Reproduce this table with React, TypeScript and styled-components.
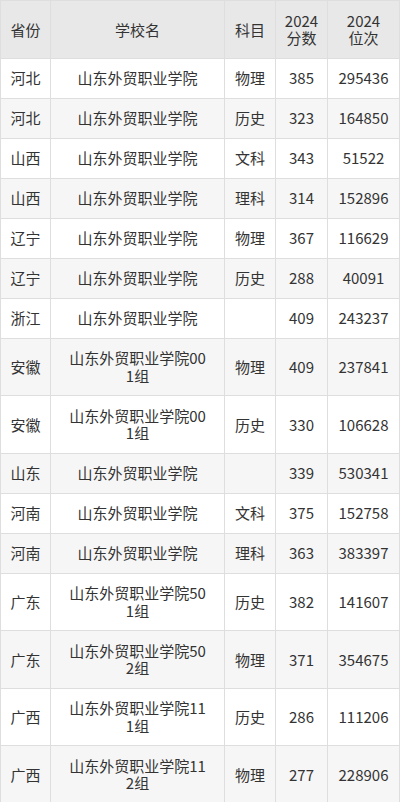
import React from "react"
import styled, { createGlobalStyle } from "styled-components"

const GlobalStyle = createGlobalStyle`
  html, body {
    margin: 0;
    padding: 0;
    background: #ffffff;
  }
  body {
    font-family: "Noto Sans CJK SC", "Noto Sans", sans-serif;
    color: #333333;
  }
`

const rows = [
  { province: "河北", school: "山东外贸职业学院", subject: "物理", score: "385", rank: "295436" },
  { province: "河北", school: "山东外贸职业学院", subject: "历史", score: "323", rank: "164850" },
  { province: "山西", school: "山东外贸职业学院", subject: "文科", score: "343", rank: "51522" },
  { province: "山西", school: "山东外贸职业学院", subject: "理科", score: "314", rank: "152896" },
  { province: "辽宁", school: "山东外贸职业学院", subject: "物理", score: "367", rank: "116629" },
  { province: "辽宁", school: "山东外贸职业学院", subject: "历史", score: "288", rank: "40091" },
  { province: "浙江", school: "山东外贸职业学院", subject: "", score: "409", rank: "243237" },
  { province: "安徽", school: "山东外贸职业学院001组", subject: "物理", score: "409", rank: "237841" },
  { province: "安徽", school: "山东外贸职业学院001组", subject: "历史", score: "330", rank: "106628" },
  { province: "山东", school: "山东外贸职业学院", subject: "", score: "339", rank: "530341" },
  { province: "河南", school: "山东外贸职业学院", subject: "文科", score: "375", rank: "152758" },
  { province: "河南", school: "山东外贸职业学院", subject: "理科", score: "363", rank: "383397" },
  { province: "广东", school: "山东外贸职业学院501组", subject: "历史", score: "382", rank: "141607" },
  { province: "广东", school: "山东外贸职业学院502组", subject: "物理", score: "371", rank: "354675" },
  { province: "广西", school: "山东外贸职业学院111组", subject: "历史", score: "286", rank: "111206" },
  { province: "广西", school: "山东外贸职业学院112组", subject: "物理", score: "277", rank: "228906" },
]

const TableContainer = styled.table`
  width: 399px;
  table-layout: fixed;
  border-collapse: collapse;
  font-size: 15px;
  line-height: 17.5px;
  color: #333333;

  & tbody tr:nth-child(even) {
    background-color: #f6f6f6;
  }

  & th,
  & td {
    border: 1px solid #dedede;
    padding: 10.75px 4px;
    text-align: center;
    vertical-align: middle;
    word-break: break-all;
  }

  & th {
    font-weight: normal;
    background-color: #e8e8e8;
    color: #333333;
  }
`

const Col = styled.col<{ $w: number }>`
  width: ${({ $w }) => $w}px;
`

const SchoolCell = styled.td`
  && {
    padding-left: 16px;
    padding-right: 16px;
  }
`

const HeadLine = styled.span`
  display: block;
  line-height: 17.5px;
`

export default function App() {
  return (
    <>
      <GlobalStyle />
      <TableContainer>
        <colgroup>
          <Col $w={50} />
          <Col $w={174} />
          <Col $w={51} />
          <Col $w={52} />
          <Col $w={72} />
        </colgroup>
        <thead>
          <tr>
            <th>省份</th>
            <th>学校名</th>
            <th>科目</th>
            <th>
              <HeadLine>2024</HeadLine>
              <HeadLine>分数</HeadLine>
            </th>
            <th>
              <HeadLine>2024</HeadLine>
              <HeadLine>位次</HeadLine>
            </th>
          </tr>
        </thead>
        <tbody>
          {rows.map((row, i) => (
            <tr key={i}>
              <td>{row.province}</td>
              <SchoolCell>{row.school}</SchoolCell>
              <td>{row.subject}</td>
              <td>{row.score}</td>
              <td>{row.rank}</td>
            </tr>
          ))}
        </tbody>
      </TableContainer>
    </>
  )
}
